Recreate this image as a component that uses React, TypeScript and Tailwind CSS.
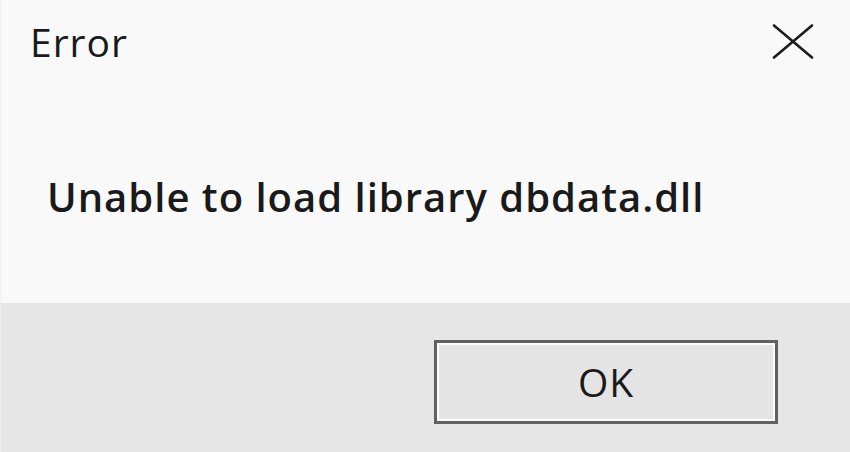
import React from 'react';

const CloseIcon: React.FC = () => (
  <svg width="42" height="35" viewBox="0 0 42 35" fill="none">
    <path d="M2 1.5L40 33.5M40 1.5L2 33.5" stroke="#1c1c1c" strokeWidth="2.6" strokeLinecap="round" />
  </svg>
);

export default function App() {
  return (
    <div
      className="w-[850px] h-[452px] flex flex-col bg-[#f9f9f9] text-[#1a1a1a] overflow-hidden border-l border-[#f3eded]"
      style={{ fontFamily: '"Open Sans", "Noto Sans", sans-serif' }}
    >
      <div className="h-[303px] flex flex-col">
        <div className="flex items-start justify-between pl-[29px] pr-[36px] pt-[18px]">
          <h1 className="text-[39px] leading-[48px] tracking-[1px]">Error</h1>
          <button className="mt-[6px]" aria-label="Close">
            <CloseIcon />
          </button>
        </div>
        <p className="mt-[107px] pl-[46px] text-[40px] leading-[48px] font-semibold tracking-[1px]">
          Unable to load library dbdata.dll
        </p>
      </div>
      <div className="flex-1 bg-[#e6e6e6] flex items-start justify-end pt-[37px] pr-[72px]">
        <button className="w-[344px] h-[84px] border-[3px] border-[#616161] bg-[#e4e4e4] shadow-[inset_0_0_0_2px_#fbfbfb] flex items-center justify-center text-[39px] font-medium tracking-[1px] leading-none pb-[2px]">
          OK
        </button>
      </div>
    </div>
  );
}
